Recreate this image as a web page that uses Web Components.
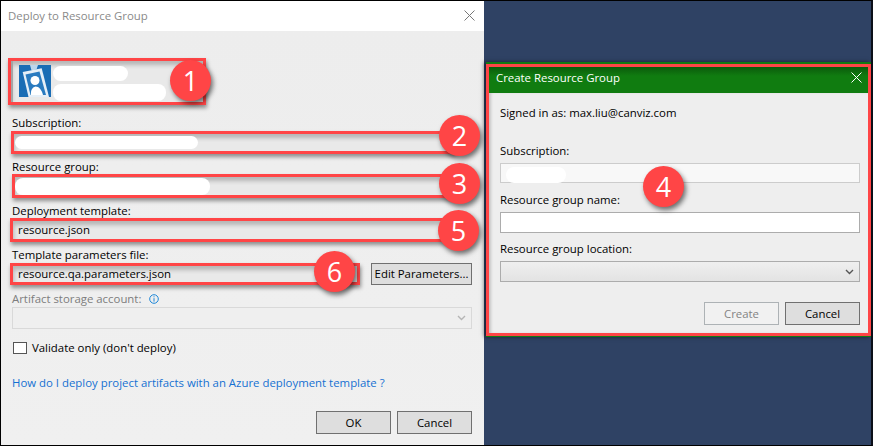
<!DOCTYPE html>
<html>
<head>
<meta charset="utf-8">
<title>Deploy to Resource Group</title>
<style>
  html, body { margin: 0; padding: 0; background: #2f4264; }
  body { font: 11.4px/14px "Open Sans", "Noto Sans", sans-serif; color: #000; }
</style>
</head>
<body>

<shot-frame>
  <deploy-dialog></deploy-dialog>
  <create-dialog></create-dialog>
  <call-out n="1" style="left:170px;top:60px"></call-out>
  <call-out n="2" style="left:439px;top:115px"></call-out>
  <call-out n="3" style="left:439px;top:163px"></call-out>
  <call-out n="5" style="left:438px;top:210px"></call-out>
  <call-out n="6" style="left:314px;top:251px"></call-out>
  <call-out n="4" style="left:643px;top:166px"></call-out>
</shot-frame>

<script>
const closeIcon = `<svg width="11" height="11" viewBox="0 0 11 11"><path d="M.5.5l10 10M10.5.5l-10 10" stroke="currentColor" stroke-width="1" fill="none"/></svg>`;
const chevron = `<svg width="9" height="6" viewBox="0 0 9 6"><path d="M1 1l3.5 3.5L8 1" stroke="currentColor" stroke-width="1.4" fill="none"/></svg>`;

class ShotFrame extends HTMLElement {
    constructor() {
        super();
        this.attachShadow({ mode: 'open' });
        this.shadowRoot.innerHTML = `
      <style>
        :host { display: block; position: relative; box-sizing: border-box; width: 873px; height: 446px; overflow: hidden;
          background: #2f4264; border-top: 1px solid #000; border-right: 2px solid #0b0f18; border-bottom: 1px solid #000; }
        .wrap { display: flex; height: 444px; }
      </style>
      <div class="wrap"><slot></slot></div>
    `;
    }
}

class CallOut extends HTMLElement {
    constructor() {
        super();
        this.attachShadow({ mode: 'open' });
    }

    connectedCallback() {
        this.shadowRoot.innerHTML = `
      <style>
        :host { position: absolute; display: flex; align-items: center; justify-content: center; width: 41px; height: 41px; margin-top: -1px;
          border-radius: 50%; background: #ff4546; color: #fff; box-shadow: 2px 3px 5px rgba(0,0,0,.55);
          font: 27px/41px "Open Sans", sans-serif; z-index: 5; }
      </style>
      ${this.getAttribute('n')}
    `;
    }
}

class MarkBox extends HTMLElement {
    constructor() {
        super();
        this.attachShadow({ mode: 'open' });
        this.shadowRoot.innerHTML = `
      <style>
        :host { display: flex; align-items: center; box-sizing: border-box; border: 3px solid #ff4546;
          box-shadow: 1px 3px 4px rgba(0,0,0,.4), inset 1px 4px 4px rgba(0,0,0,.22);
          background: #e9e9e9; padding-left: 5px; }
      </style>
      <slot></slot>
    `;
    }
}

class ScribBle extends HTMLElement {
    constructor() {
        super();
        this.attachShadow({ mode: 'open' });
        this.shadowRoot.innerHTML = `
      <style>
        :host { display: block; background: #fff; border-radius: 8px; }
      </style>
    `;
    }
}

class UiButton extends HTMLElement {
    constructor() {
        super();
        this.attachShadow({ mode: 'open' });
        this.shadowRoot.innerHTML = `
      <style>
        :host { display: flex; align-items: center; justify-content: center; box-sizing: border-box; width: 75px; height: 23px;
          background: #dedede; border: 1px solid #707070; color: #000; white-space: nowrap; }
        :host([disabled]) { background: #f1f1f1; border-color: #adb2b5; color: #838383; }
      </style>
      <slot></slot>
    `;
    }
}

class UiCombo extends HTMLElement {
    constructor() {
        super();
        this.attachShadow({ mode: 'open' });
        this.shadowRoot.innerHTML = `
      <style>
        :host { display: flex; align-items: center; justify-content: flex-end; box-sizing: border-box; padding-right: 5px;
          border: 1px solid #acacac; background: linear-gradient(#efefef, #e3e3e3); color: #555; }
        :host([disabled]) { border-color: #d9d9d9; background: #efefef; color: #b5b5b5; }
      </style>
      ${chevron}
    `;
    }
}

class DeployDialog extends HTMLElement {
    constructor() {
        super();
        this.attachShadow({ mode: 'open' });
        this.shadowRoot.innerHTML = `
      <style>
        :host { display: flex; flex-direction: column; box-sizing: border-box; width: 484px; height: 444px;
          border-left: 1px solid #000; background: #efefef; flex: none; }
        .title { display: flex; align-items: center; justify-content: space-between; flex: none; height: 30px; background: #fff;
          padding: 0 9px 0 7px; color: #8a8a8a; }
        .x { display: flex; color: #777; margin-bottom: 2px; }
        .body { flex: 1; display: flex; flex-direction: column; background: linear-gradient(#ededed, #f0f0f0); padding: 0 12px 11px 11px; }
        label { display: block; height: 14px; white-space: nowrap; }
        .id { margin: 27px 0 0 -4px; width: 198px; height: 47px; padding-left: 0; gap: 2px; align-items: flex-start; }
        .stripe { width: 2px; height: 41px; background: #a5a5a5; margin-right: 4px; }
        .id svg { margin-top: 4px; flex: none; }
        .blobs { display: flex; flex-direction: column; gap: 3px; margin-top: 5px; }
        .f1 { margin: 0 0 0 -1px; height: 23px; width: 444px; }
        .f2 { margin: 0 0 0 0; height: 24px; width: 441px; }
        .f3 { margin: 0 0 0 -2px; height: 24px; width: 446px; }
        .row { display: flex; align-items: center; margin-top: 1px; height: 22px; gap: 11px; }
        .f4 { margin-left: -2px; height: 22px; width: 350px; flex: none; }
        .row ui-button { width: 101px; height: 22px; }
        .dis { color: #7d7d7d; display: flex; align-items: center; gap: 8px; margin-top: 7px; }
        ui-combo { height: 22px; margin-top: 1px; width: 460px; }
        .check { display: flex; align-items: center; gap: 5px; margin-top: 12px; margin-left: 1px; height: 13px; }
        .box { width: 12px; height: 10px; background: #fff; border: 1px solid #555; }
        a { color: #1570d2; text-decoration: none; margin-top: 22px; }
        .foot { margin-top: auto; display: flex; justify-content: flex-end; gap: 6px; width: 460px; }
      </style>
      <div class="title"><span>Deploy to Resource Group</span><span class="x">${closeIcon}</span></div>
      <div class="body">
        <mark-box class="id">
          <div class="stripe"></div>
          <svg width="32" height="32" viewBox="0 0 32 32">
            <rect width="32" height="32" fill="#1a6db5"/>
            <path d="M11 0l1.500 5.500 5-1L19 0z" fill="#bcd6ec"/>
            <path d="M3.700 7L22.700 3.300 30 32H9.500z" fill="#e6eff7"/>
            <path d="M6.500 9.500l14-3L27 30H11.500z" fill="#2a7bc0"/>
            <circle cx="16" cy="15.500" r="4.500" fill="#fff"/>
            <path d="M12 30c-.5-4.500 1-7.500 4.500-8.500 3.500 0 6 3 7.500 8.500z" fill="#fff"/>
          </svg>
          <div class="blobs">
            <scrib-ble style="width:75px;height:15px"></scrib-ble>
            <scrib-ble style="width:113px;height:17px"></scrib-ble>
          </div>
        </mark-box>
        <label style="margin-top:11px">Subscription:</label>
        <mark-box class="f1" style="margin-top:1px"><scrib-ble style="width:183px;height:13px;margin-left:-4px"></scrib-ble></mark-box>
        <label style="margin-top:6px">Resource group:</label>
        <mark-box class="f2"><scrib-ble style="width:195px;height:17px;margin-left:-5px"></scrib-ble></mark-box>
        <label style="margin-top:6px">Deployment template:</label>
        <mark-box class="f3">resource.json</mark-box>
        <label style="margin-top:6px">Template parameters file:</label>
        <div class="row">
          <mark-box class="f4">resource.qa.parameters.json</mark-box>
          <ui-button>Edit Parameters...</ui-button>
        </div>
        <div class="dis">Artifact storage account:
          <svg width="10" height="10" viewBox="0 0 10 10"><circle cx="5" cy="5" r="4.300" fill="none" stroke="#1c86d8"/><path d="M5 4.200v3.400M5 2.300v1" stroke="#1c86d8"/></svg>
        </div>
        <ui-combo disabled></ui-combo>
        <div class="check"><div class="box"></div>Validate only (don't deploy)</div>
        <a>How do I deploy project artifacts with an Azure deployment template ?</a>
        <div class="foot"><ui-button>OK</ui-button><ui-button>Cancel</ui-button></div>
      </div>
    `;
    }
}

class CreateDialog extends HTMLElement {
    constructor() {
        super();
        this.attachShadow({ mode: 'open' });
        this.shadowRoot.innerHTML = `
      <style>
        :host { display: flex; flex-direction: column; box-sizing: border-box; flex: none; width: 385px; height: 275px; margin: 61px 0 0 2px;
          padding: 2px 0 1px; background: #127a12; box-shadow: -2px 0 4px rgba(0,0,0,.5); }
        .in { flex: 1; display: flex; flex-direction: column; border: 3px solid #ff4546; }
        .title { display: flex; align-items: center; justify-content: space-between; flex: none; box-sizing: border-box; height: 26px;
          padding: 0 6px 5px 7px; color: #fff; background: linear-gradient(#0b5a0c, #107c10 9px); }
        .body { flex: 1; display: flex; flex-direction: column; padding: 0 8px 0 11px; background: #eee;
          box-shadow: inset 3px 0 3px -1px rgba(0,0,0,.18); }
        .in-box { box-sizing: border-box; display: flex; align-items: center; height: 21px; border: 1px solid #acacac; background: #fff; }
        .dis { height: 20px; border-color: #ccc; background: #f8f8f8; padding-left: 5px; }
        .foot { display: flex; justify-content: flex-end; gap: 6px; margin-top: 20px; }
      </style>
      <div class="in">
        <div class="title"><span>Create Resource Group</span><span style="display:flex">${closeIcon}</span></div>
        <div class="body">
          <div style="margin-top:13px">Signed in as: max.liu@canviz.com</div>
          <div style="margin-top:24px">Subscription:</div>
          <div class="in-box dis" style="margin-top:5px"><scrib-ble style="width:60px;height:16px;margin-top:3px"></scrib-ble></div>
          <div style="margin-top:10px">Resource group name:</div>
          <div class="in-box" style="margin-top:5px"></div>
          <div style="margin-top:9px">Resource group location:</div>
          <ui-combo style="height:21px;margin-top:5px"></ui-combo>
          <div class="foot"><ui-button disabled>Create</ui-button><ui-button>Cancel</ui-button></div>
        </div>
      </div>
    `;
    }
}

customElements.define('shot-frame', ShotFrame);
customElements.define('call-out', CallOut);
customElements.define('mark-box', MarkBox);
customElements.define('scrib-ble', ScribBle);
customElements.define('ui-button', UiButton);
customElements.define('ui-combo', UiCombo);
customElements.define('deploy-dialog', DeployDialog);
customElements.define('create-dialog', CreateDialog);
</script>
</body>
</html>
